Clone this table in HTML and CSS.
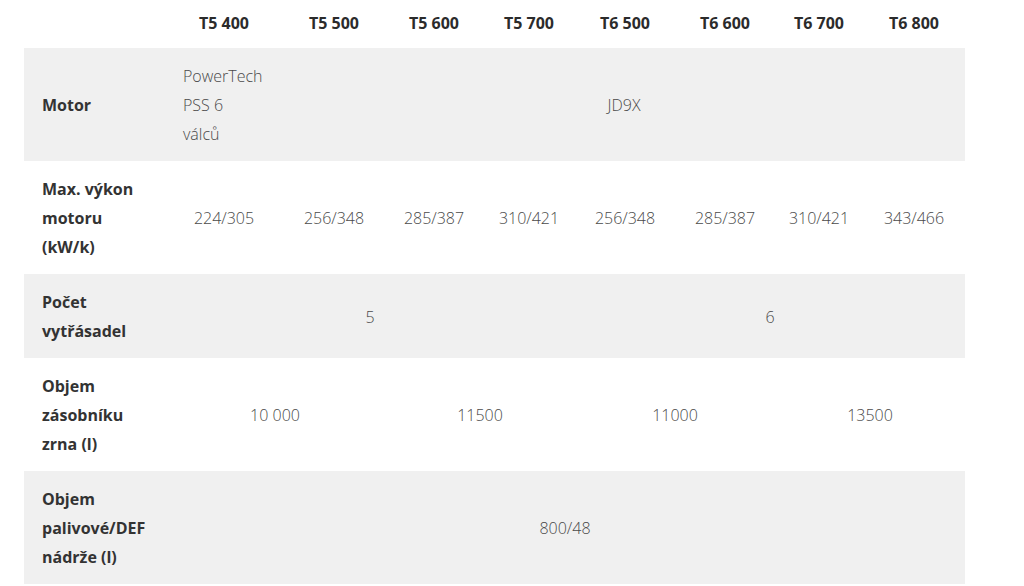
FILE: index.html
```html
<!DOCTYPE html>
<html lang="cs">
<head>
<meta charset="utf-8">
<title>Specifikace</title>
<link rel="stylesheet" href="styles.css">
</head>
<body>
<table class="spec">
  <colgroup>
    <col class="c-label">
    <col class="c1"><col class="c2"><col class="c3"><col class="c4">
    <col class="c5"><col class="c6"><col class="c7"><col class="c8">
  </colgroup>
  <thead>
    <tr class="head">
      <th></th>
      <th>T5 400</th><th>T5 500</th><th>T5 600</th><th>T5 700</th>
      <th>T6 500</th><th>T6 600</th><th>T6 700</th><th>T6 800</th>
    </tr>
  </thead>
  <tbody>
    <tr class="shade">
      <th class="label">Motor</th>
      <td class="left">PowerTech<br>PSS 6<br>válců</td>
      <td colspan="7">JD9X</td>
    </tr>
    <tr>
      <th class="label">Max. výkon<br>motoru<br>(kW/k)</th>
      <td>224/305</td><td>256/348</td><td>285/387</td><td>310/421</td>
      <td>256/348</td><td>285/387</td><td>310/421</td><td>343/466</td>
    </tr>
    <tr class="shade">
      <th class="label">Počet<br>vytřásadel</th>
      <td colspan="4">5</td>
      <td colspan="4">6</td>
    </tr>
    <tr>
      <th class="label">Objem<br>zásobníku<br>zrna (l)</th>
      <td colspan="2">10 000</td>
      <td colspan="2">11500</td>
      <td colspan="2">11000</td>
      <td colspan="2">13500</td>
    </tr>
    <tr class="shade">
      <th class="label">Objem<br>palivové/DEF<br>nádrže (l)</th>
      <td colspan="8">800/48</td>
    </tr>
  </tbody>
</table>
</body>
</html>
```

FILE: styles.css
```css
html, body {
  margin: 0;
  padding: 0;
  background: #ffffff;
}

body {
  font-family: "Open Sans", "Noto Sans", sans-serif;
  font-size: 16px;
  color: #555555;
}

.spec {
  margin-left: 24px;
  width: 941px;
  border-collapse: collapse;
  table-layout: fixed;
}

.c-label { width: 141px; }
.c1 { width: 118px; }
.c2 { width: 102px; }
.c3 { width: 98px; }
.c4 { width: 92px; }
.c5 { width: 100px; }
.c6 { width: 100px; }
.c7 { width: 88px; }
.c8 { width: 102px; }

.head th {
  font-weight: 700;
  color: #2b2b2b;
  line-height: 29px;
  padding: 9px 0 10px;
  text-align: center;
  white-space: nowrap;
}

.spec td,
.spec tbody th {
  padding: 14px 0 12px;
  line-height: 29px;
  vertical-align: middle;
}

.spec td {
  text-align: center;
  font-weight: 300;
  color: #4a4a4a;
  white-space: nowrap;
}

.spec td.left {
  text-align: left;
  padding-left: 18px;
}

.spec .label {
  text-align: left;
  padding-left: 18px;
  font-weight: 700;
  color: #333333;
  font-size: 16px;
  white-space: nowrap;
}

.shade {
  background: #f0f0f0;
}
```
